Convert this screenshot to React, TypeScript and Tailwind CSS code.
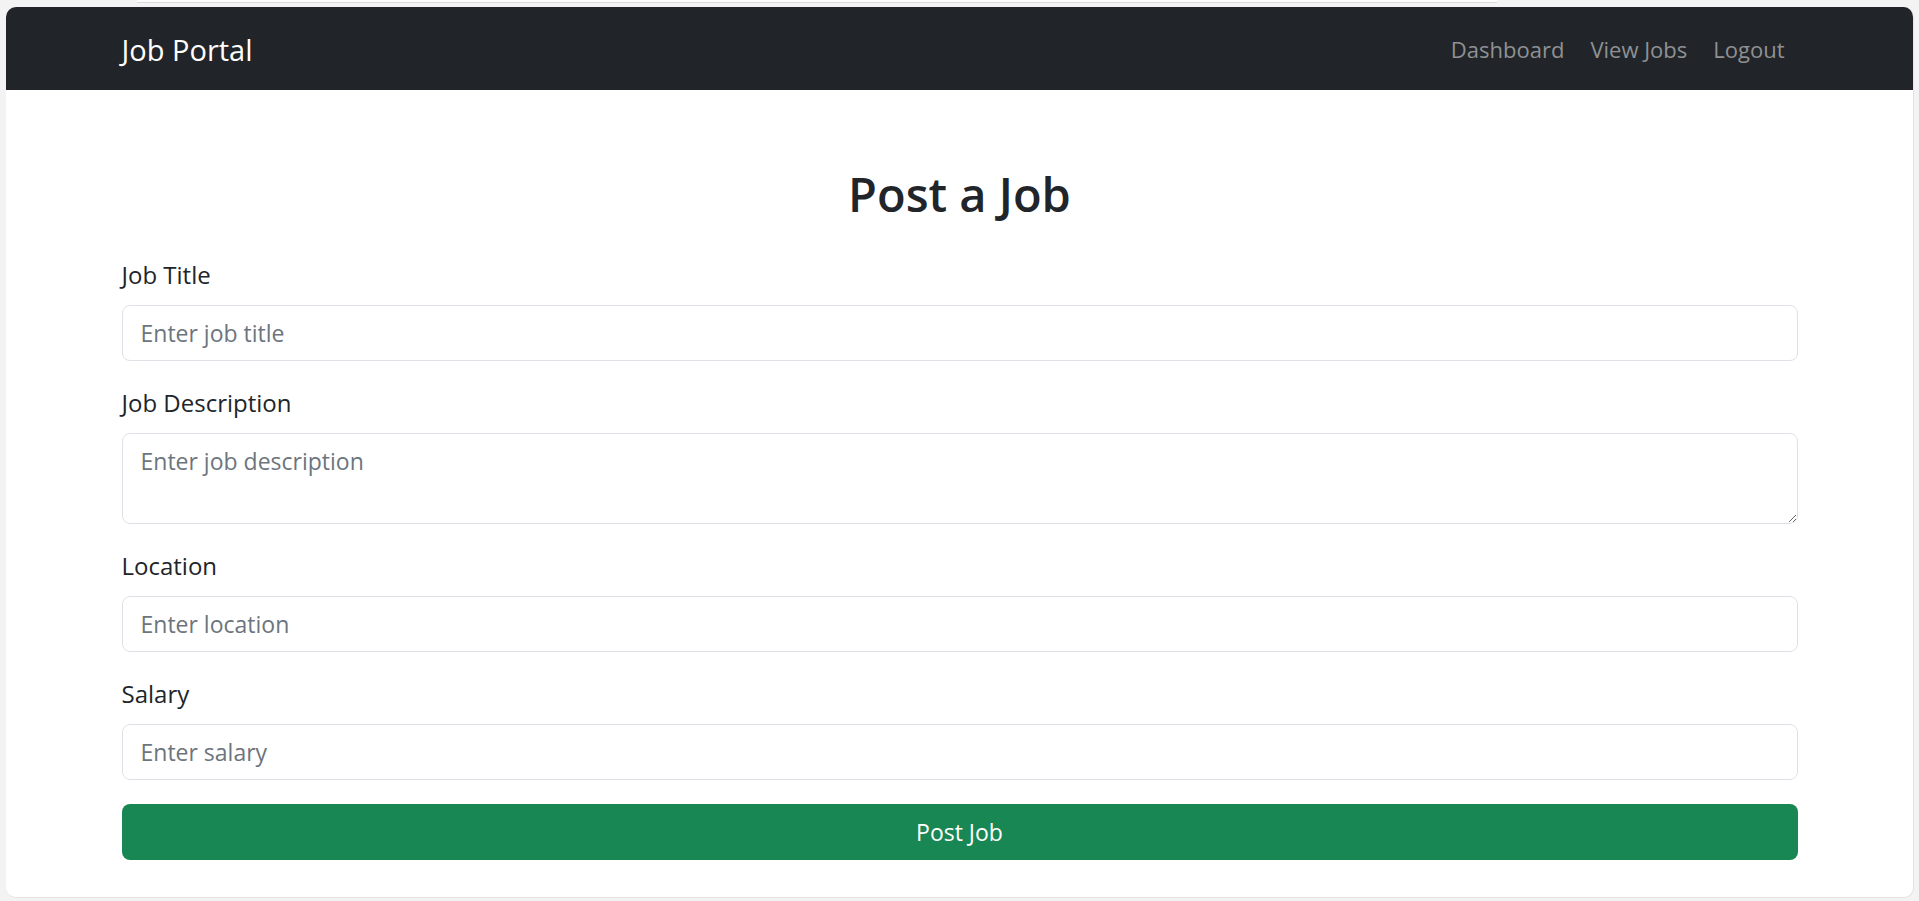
import { useState } from "react";

function Field({ label, placeholder, value, onChange }: { label: string; placeholder: string; value: string; onChange: (v: string) => void }) {
    return (
        <div className="flex flex-col mb-[24px]">
            <label className="text-[24px] leading-[36px] text-[#212529] mb-[12px]">{label}</label>
            <input
                className="h-[56px] w-full border border-[#dee2e6] rounded-[8px] px-[18px] text-[23px] text-[#212529] placeholder:text-[#6c757d] outline-none"
                placeholder={placeholder}
                value={value}
                onChange={(e) => onChange(e.target.value)}
            />
        </div>
    );
}

function App() {
    const [title, setTitle] = useState("");
    const [description, setDescription] = useState("");
    const [location, setLocation] = useState("");
    const [salary, setSalary] = useState("");

    return (
        <div className="min-h-screen bg-[#f3f3f3] font-['Open_Sans',sans-serif] overflow-hidden">

            {/* Strip at the top */}

            <div className="ml-[137px] w-[1360px] h-[3px] bg-[#fbfbfb] border-b border-[#dadada]"></div>

            {/* Card */}

            <div className="ml-[6px] mt-[4px] w-[1908px] h-[891px] bg-white rounded-[10px] overflow-hidden border-r border-b border-[#e3e3e3]">

                {/* Navbar */}

                <nav className="h-[83px] bg-[#212529] flex items-center pt-[2px]">
                    <div className="w-[1676px] mx-auto flex items-center justify-between">
                        <span className="text-white text-[29px] leading-[44px]">Job Portal</span>
                        <div className="flex">
                            <a className="px-[13px] text-[22px] text-[#8f9193] cursor-pointer">Dashboard</a>
                            <a className="px-[13px] text-[22px] text-[#8f9193] cursor-pointer">View Jobs</a>
                            <a className="px-[13px] text-[22px] text-[#8f9193] cursor-pointer">Logout</a>
                        </div>
                    </div>
                </nav>

                {/* Form */}

                <div className="w-[1676px] mx-auto pt-[75px]">
                    <h2 className="text-center text-[47px] leading-[58px] font-semibold text-[#212529] mb-[34px]">Post a Job</h2>

                    <Field label="Job Title" placeholder="Enter job title" value={title} onChange={setTitle} />

                    <div className="flex flex-col mb-[24px]">
                        <label className="text-[24px] leading-[36px] text-[#212529] mb-[12px]">Job Description</label>
                        <textarea
                            className="h-[91px] w-full border border-[#dee2e6] rounded-[8px] px-[18px] py-[9px] text-[23px] leading-[36px] text-[#212529] placeholder:text-[#6c757d] outline-none"
                            placeholder="Enter job description"
                            value={description}
                            onChange={(e) => setDescription(e.target.value)}
                        />
                    </div>

                    <Field label="Location" placeholder="Enter location" value={location} onChange={setLocation} />

                    <Field label="Salary" placeholder="Enter salary" value={salary} onChange={setSalary} />

                    <button className="w-full h-[56px] rounded-[8px] bg-[#198754] text-white text-[23px] cursor-pointer">Post Job</button>
                </div>
            </div>
        </div>
    );
}

export default App;
